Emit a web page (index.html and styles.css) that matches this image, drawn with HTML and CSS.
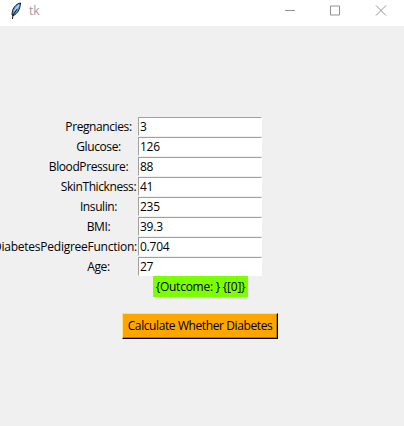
FILE: index.html
```html
<!DOCTYPE html>
<html lang="en">
<head>
<meta charset="utf-8">
<title>tk</title>
<link rel="stylesheet" href="styles.css">
</head>
<body>
<header class="titlebar">
  <svg class="feather" width="14" height="18" viewBox="0 0 14 18"><path d="M11.500 1C8 1.500 5 4.500 3.500 8.500L3 13l1.500.5C8.500 11.500 11 7.500 11.500 1Z" fill="#5ba3f0" stroke="#151515"/><path d="M10 3 5.500 9" stroke="#b9dcfa" stroke-width="1.300"/><path d="M8 7 4 13 3.500 17" fill="none" stroke="#111"/></svg>
  <span class="title">tk</span>
  <svg class="controls" width="102" height="12" viewBox="0 0 102 12" fill="none" stroke="#929292"><path d="M0 5.500h10M45.500 1h9v9h-9zM91 .5l10 10M101 .5l-10 10"/></svg>
</header>
<main class="content">
  <form class="form">
    <div class="row"><label class="label">Pregnancies:</label><div class="entry">3</div></div>
    <div class="row"><label class="label">Glucose:</label><div class="entry">126</div></div>
    <div class="row"><label class="label pressure">BloodPressure:</label><div class="entry">88</div></div>
    <div class="row"><label class="label">SkinThickness:</label><div class="entry">41</div></div>
    <div class="row"><label class="label">Insulin:</label><div class="entry">235</div></div>
    <div class="row"><label class="label">BMI:</label><div class="entry">39.3</div></div>
    <div class="row"><label class="label pedigree">DiabetesPedigreeFunction:</label><div class="entry">0.704</div></div>
    <div class="row"><label class="label">Age:</label><div class="entry">27</div></div>
  </form>
  <div class="outcome">{Outcome: } {[0]}</div>
  <button class="calculate" type="button">Calculate Whether Diabetes</button>
</main>
</body>
</html>
```
FILE: styles.css
```css
* { box-sizing: border-box; }
body {
  margin: 0;
  height: 426px;
  overflow: hidden;
  background: #f0f0f0;
  color: #000;
  font: 12px/20px "Open Sans", sans-serif;
  letter-spacing: -0.25px;
}
.titlebar {
  display: flex;
  align-items: center;
  height: 26px;
  padding: 0 17px 5px 9px;
  background: #fff;
}
.title { margin-left: 6px; color: #a3979d; letter-spacing: 0; }
.controls { margin-left: auto; }
.content { padding-top: 91px; }
.row { display: flex; height: 20px; }
.label {
  display: flex;
  justify-content: center;
  flex: none;
  width: 138px;
  padding-left: 59px;
  letter-spacing: -0.4px;
  white-space: nowrap;
}
.pressure { padding: 0 0 0 39px; }
.pedigree { justify-content: flex-end; padding: 0 1px 0 0; letter-spacing: -0.25px; }
.entry {
  width: 124px;
  height: 19px;
  padding-left: 1px;
  line-height: 18px;
  background: #fff;
  border: 1px solid;
  border-color: #a0a0a0 #fff #fff #a0a0a0;
}
.outcome {
  width: 95px;
  height: 21px;
  margin: -1px 0 0 153px;
  line-height: 21px;
  text-align: center;
  white-space: nowrap;
  background: #7cff00;
}
.calculate {
  display: block;
  width: 156px;
  height: 26px;
  margin: 16px 0 0 122px;
  padding: 0;
  font: inherit;
  letter-spacing: -0.4px;
  white-space: nowrap;
  background: #ffa500;
  border: 1px solid;
  border-color: #ffe27a #000 #000 #ffe27a;
  box-shadow: inset -1px -1px #b37400;
}
```
